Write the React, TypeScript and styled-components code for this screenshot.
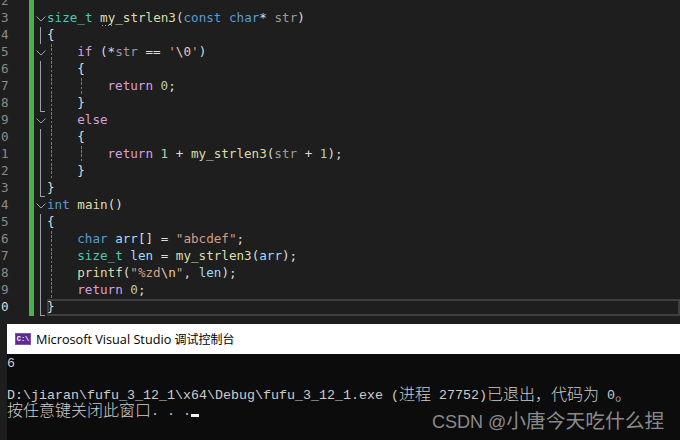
import React from "react";
import styled, { createGlobalStyle } from "styled-components";

const Global = createGlobalStyle`
    html, body {
        margin: 0;
        padding: 0;
        background: #1e1e1e;
    }
`;

const Page = styled.div`
    width: 680px;
    height: 440px;
    overflow: hidden;
    display: flex;
    flex-direction: column;
    background: #1e1e1e;
`;

const Editor = styled.div`
    height: 323.5px;
    flex: none;
    overflow: hidden;
`;

const Lines = styled.div`
    margin-top: -7px;
    display: flex;
    flex-direction: column;
`;

const Row = styled.div`
    display: flex;
    height: 17px;
    font-family: "DejaVu Sans Mono", monospace;
    font-size: 12.6px;
    line-height: 15px;
    white-space: pre;
`;

const LineNumber = styled.div<{ $current?: boolean }>`
    width: 28.5px;
    flex: none;
    padding-left: 1px;
    box-sizing: border-box;
    color: ${(p) => (p.$current ? "#dcdcdc" : "#8a8a8a")};
`;

const ChangeBar = styled.div`
    width: 5px;
    flex: none;
    background: #4caf50;
`;

type FoldKind = "none" | "open" | "line" | "end";

const FoldCell = styled.div<{ $kind: FoldKind }>`
    width: 13.5px;
    flex: none;
    display: flex;
    align-items: center;
    box-sizing: border-box;
    padding-left: 2px;
    svg {
        display: block;
    }
    ${(p) =>
        p.$kind === "line" &&
        `background: linear-gradient(#a0a0a0, #a0a0a0) 6.5px 0 / 1px 100% no-repeat;`}
    ${(p) =>
        p.$kind === "end" &&
        `background:
            linear-gradient(#a0a0a0, #a0a0a0) 6.5px 0 / 1px 100% no-repeat,
            linear-gradient(#a0a0a0, #a0a0a0) 6.5px 16px / 5px 1px no-repeat;`}
`;

const Code = styled.div<{ $current?: boolean }>`
    flex: 1;
    min-width: 0;
    color: #dcdcdc;
    ${(p) => p.$current && `box-shadow: inset 0 0 0 2px #3f3f3f;`}
`;

const Indent = styled.span<{ $guide?: boolean }>`
    display: inline-block;
    width: 30.25px;
    height: 17px;
    vertical-align: top;
    ${(p) =>
        p.$guide &&
        `background: repeating-linear-gradient(to bottom, #787878 0 2.75px, transparent 2.75px 4.25px) 4px 0 / 1px 100% no-repeat;`}
`;

const colors = {
    type: "#4ec9b0",
    fn: "#dcdcaa",
    key: "#569cd6",
    ctl: "#d8a0df",
    str: "#d69d85",
    esc: "#e8c9bb",
    num: "#b5cea8",
    local: "#9cdcfe",
    param: "#9a9a9a",
    plain: "#dcdcdc",
};

type Tone = keyof typeof colors;

const Token = styled.span<{ $tone: Tone }>`
    color: ${(p) => colors[p.$tone]};
`;

const Hinted = styled.span`
    padding-bottom: 1px;
    background: repeating-linear-gradient(to right, #a0a0a0 0 1px, transparent 1px 3px) 2px 100% / 10px 1px no-repeat;
`;

const Chevron = () => (
    <svg width="10" height="6" viewBox="0 0 10 6" fill="none">
        <path d="M0.5 0.5 L5 5 L9.5 0.5" stroke="#a0a0a0" strokeWidth="1" />
    </svg>
);

const Console = styled.div`
    flex: 1;
    margin-left: 7px;
    display: flex;
    flex-direction: column;
    min-height: 0;
`;

const TitleBar = styled.div`
    height: 30.5px;
    flex: none;
    background: #ffffff;
    display: flex;
    align-items: center;
    gap: 5px;
    padding-left: 8px;
    font-family: "Open Sans", "Noto Sans CJK SC", sans-serif;
    font-size: 12.7px;
    color: #000000;
`;

const TitleCjk = styled.span`
    font-size: 12px;
`;

const AppIcon = styled.div`
    width: 16px;
    height: 12px;
    background: #5c2d91;
    border: 1px solid #7a5aa8;
    box-sizing: border-box;
    color: #ffffff;
    font-family: "Liberation Mono", monospace;
    font-size: 7px;
    font-weight: bold;
    line-height: 10px;
    text-align: center;
`;

const ConsoleBody = styled.div`
    flex: 1;
    background: #0c0c0c;
    padding-top: 2px;
    color: #cccccc;
    font-family: "Liberation Mono", monospace;
    font-size: 13.33px;
    white-space: pre;
`;

const ConsoleLine = styled.div`
    height: 16px;
    line-height: 16px;
`;

const Wide = styled.span`
    font-family: "Noto Sans CJK SC", sans-serif;
    font-size: 16px;
    font-weight: 300;
    line-height: 0;
    vertical-align: -1px;
`;

const Cursor = styled.span`
    display: inline-block;
    width: 8px;
    height: 3.5px;
    background: #f2f2f2;
    vertical-align: -2px;
`;

const Watermark = styled.div`
    position: absolute;
    left: 432px;
    top: 409px;
    color: #8a8a8a;
    font-family: "Liberation Sans", "Noto Sans CJK SC", sans-serif;
    font-size: 18px;
    line-height: 24px;
    white-space: nowrap;
    span {
        font-size: 19.75px;
    }
`;

type Seg = [Tone, string];

interface LineData {
    num: string;
    fold: FoldKind;
    guides?: number;
    segs: Seg[];
    hint?: boolean;
}

const lines: LineData[] = [
    { num: "2", fold: "none", segs: [] },
    {
        num: "3",
        fold: "open",
        hint: true,
        segs: [
            ["type", "size_t"],
            ["plain", " "],
            ["fn", "my_strlen3"],
            ["plain", "("],
            ["key", "const char"],
            ["plain", "* "],
            ["param", "str"],
            ["plain", ")"],
        ],
    },
    { num: "4", fold: "line", segs: [["plain", "{"]] },
    {
        num: "5",
        fold: "open",
        guides: 1,
        segs: [
            ["ctl", "if"],
            ["plain", " (*"],
            ["param", "str"],
            ["plain", " == "],
            ["str", "'"],
            ["esc", "\\0"],
            ["str", "'"],
            ["plain", ")"],
        ],
    },
    { num: "6", fold: "line", guides: 1, segs: [["plain", "{"]] },
    {
        num: "7",
        fold: "line",
        guides: 2,
        segs: [
            ["ctl", "return"],
            ["plain", " "],
            ["num", "0"],
            ["plain", ";"],
        ],
    },
    { num: "8", fold: "end", guides: 1, segs: [["plain", "}"]] },
    { num: "9", fold: "open", guides: 1, segs: [["ctl", "else"]] },
    { num: "0", fold: "line", guides: 1, segs: [["plain", "{"]] },
    {
        num: "1",
        fold: "line",
        guides: 2,
        segs: [
            ["ctl", "return"],
            ["plain", " "],
            ["num", "1"],
            ["plain", " + "],
            ["fn", "my_strlen3"],
            ["plain", "("],
            ["param", "str"],
            ["plain", " + "],
            ["num", "1"],
            ["plain", ");"],
        ],
    },
    { num: "2", fold: "line", guides: 1, segs: [["plain", "}"]] },
    { num: "3", fold: "end", segs: [["plain", "}"]] },
    {
        num: "4",
        fold: "open",
        segs: [
            ["key", "int"],
            ["plain", " "],
            ["fn", "main"],
            ["plain", "()"],
        ],
    },
    { num: "5", fold: "line", segs: [["plain", "{"]] },
    {
        num: "6",
        fold: "line",
        guides: 1,
        segs: [
            ["key", "char"],
            ["plain", " "],
            ["local", "arr"],
            ["plain", "[] = "],
            ["str", "\"abcdef\""],
            ["plain", ";"],
        ],
    },
    {
        num: "7",
        fold: "line",
        guides: 1,
        segs: [
            ["type", "size_t"],
            ["plain", " "],
            ["local", "len"],
            ["plain", " = "],
            ["fn", "my_strlen3"],
            ["plain", "("],
            ["local", "arr"],
            ["plain", ");"],
        ],
    },
    {
        num: "8",
        fold: "line",
        guides: 1,
        segs: [
            ["fn", "printf"],
            ["plain", "("],
            ["str", "\"%zd"],
            ["esc", "\\n"],
            ["str", "\""],
            ["plain", ", "],
            ["local", "len"],
            ["plain", ");"],
        ],
    },
    {
        num: "9",
        fold: "line",
        guides: 1,
        segs: [
            ["ctl", "return"],
            ["plain", " "],
            ["num", "0"],
            ["plain", ";"],
        ],
    },
    { num: "0", fold: "end", segs: [["plain", "}"]] },
];

function renderSegs(line: LineData) {
    return line.segs.map(([tone, text], i) =>
        line.hint && tone === "fn" ? (
            <Token key={i} $tone={tone}>
                <Hinted>{text}</Hinted>
            </Token>
        ) : (
            <Token key={i} $tone={tone}>
                {text}
            </Token>
        )
    );
}

export default function App() {
    return (
        <Page>
            <Global />
            <Editor>
                <Lines>
                    {lines.map((line, index) => {
                        const current = index === lines.length - 1;
                        return (
                            <Row key={index}>
                                <LineNumber $current={current}>{line.num}</LineNumber>
                                <ChangeBar />
                                <FoldCell $kind={line.fold}>{line.fold === "open" && <Chevron />}</FoldCell>
                                <Code $current={current}>
                                    {Array.from({ length: line.guides || 0 }).map((_, i) => (
                                        <Indent key={i} $guide />
                                    ))}
                                    {renderSegs(line)}
                                </Code>
                            </Row>
                        );
                    })}
                </Lines>
            </Editor>
            <Console>
                <TitleBar>
                    <AppIcon>C:\</AppIcon>
                    <span>
                        Microsoft Visual Studio <TitleCjk>调试控制台</TitleCjk>
                    </span>
                </TitleBar>
                <ConsoleBody>
                    <ConsoleLine>6</ConsoleLine>
                    <ConsoleLine />
                    <ConsoleLine>
                        {"D:\\jiaran\\fufu_3_12_1\\x64\\Debug\\fufu_3_12_1.exe ("}
                        <Wide>进程</Wide>
                        {" 27752)"}
                        <Wide>已退出，代码为</Wide>
                        {" 0"}
                        <Wide>。</Wide>
                    </ConsoleLine>
                    <ConsoleLine>
                        <Wide>按任意键关闭此窗口</Wide>
                        {". . ."}
                        <Cursor />
                    </ConsoleLine>
                </ConsoleBody>
            </Console>
            <Watermark>
                CSDN @<span>小唐今天吃什么捏</span>
            </Watermark>
        </Page>
    );
}
